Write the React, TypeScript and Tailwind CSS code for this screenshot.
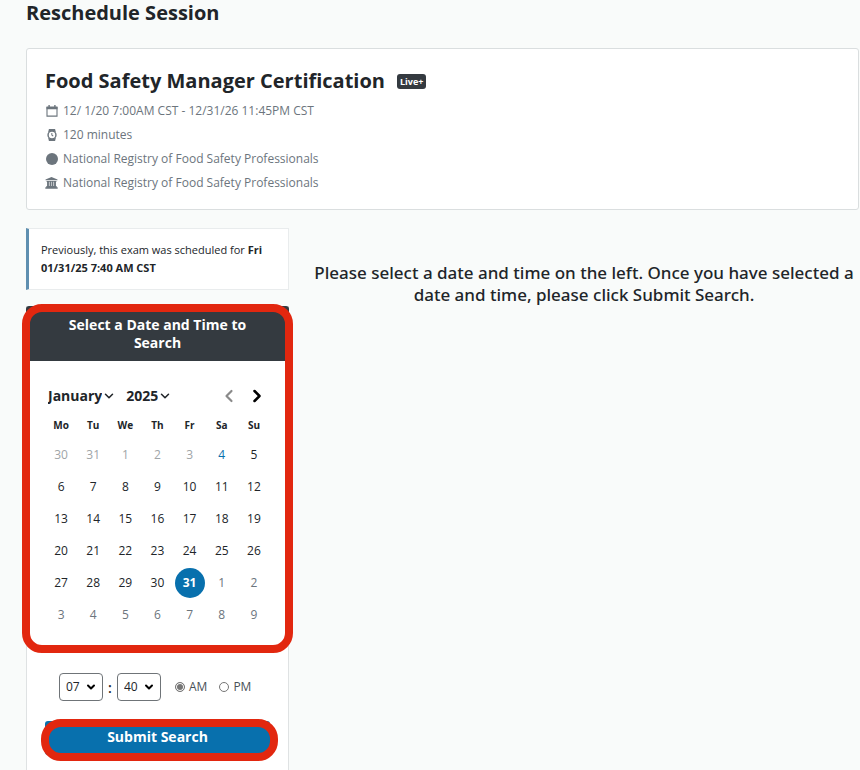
import type { ReactNode } from 'react';
import clsx from 'clsx';
import { ChevronDown, ChevronLeft, ChevronRight } from 'lucide-react';

const WEEKDAYS = ['Mo', 'Tu', 'We', 'Th', 'Fr', 'Sa', 'Su'];

const MONTHS = [
  'January',
  'February',
  'March',
  'April',
  'May',
  'June',
  'July',
  'August',
  'September',
  'October',
  'November',
  'December',
];

const FIRST_AVAILABLE = 4;
const SELECTED = 31;

type Day = { label: number; date: number };

// date counts from January 1st, so December 30th is -1
const WEEKS: Day[][] = Array.from({ length: 6 }, (_, week) =>
  Array.from({ length: 7 }, (_, day) => {
    const date = week * 7 + day - 1;
    const label = date < 1 ? date + 31 : date > 31 ? date - 31 : date;
    return { label, date };
  }),
);

const WatchIcon = () => (
  <svg viewBox="0 0 12 14" className="h-3 w-3" fill="none" aria-hidden="true">
    <path d="M2.4 0h7.2l0.8 3.4H1.6zM2.4 14h7.2l0.8-3.4H1.6z" fill="#6c757d" />
    <circle cx="6" cy="7" r="4.6" fill="#fff" stroke="#6c757d" strokeWidth="1.7" />
    <path d="M5.8 4.6V7l1.6 1.3" stroke="#6c757d" strokeWidth="1.2" />
  </svg>
);

const CalendarIcon = () => (
  <svg viewBox="0 0 12 12" className="size-3" fill="none" aria-hidden="true">
    <path d="M1 2.5h10v8.6H1z" stroke="#6c757d" strokeWidth="1.1" />
    <path d="M0.5 1.6h11v2.6H0.5zM2.4 0h1.4v2H2.4zM8.2 0h1.4v2H8.2z" fill="#6c757d" />
  </svg>
);

const InstitutionIcon = () => (
  <svg viewBox="0 0 14 13" className="h-3 w-[13px]" fill="#6c757d" aria-hidden="true">
    <path d="M7 0l6.5 2.6v1h-13v-1zM1.6 4.2h10.8v1H1.6zM2.2 5h2v5h-2zM4.9 5h1.8v5H4.9zM7.3 5h1.8v5H7.3zM9.8 5h2v5h-2zM1.4 9.8h11.2v1.2H1.4zM0.3 11h13.4v1.8H0.3z" />
  </svg>
);

const DetailRow = ({ icon, children }: { icon: ReactNode; children: ReactNode }) => (
  <li className="flex h-6 items-center gap-[5px]">
    <span className="flex w-[13px] shrink-0 justify-center">{icon}</span>
    <span>{children}</span>
  </li>
);

const ExamCard = () => (
  <section className="rounded-[3px] border border-[#dadedf] bg-white px-[18px] pt-[18px] pb-3.5">
    <div className="flex items-center gap-3">
      <h2 className="text-[20px] leading-7 font-bold">Food Safety Manager Certification</h2>
      <span className="rounded-[3px] bg-[#343a40] px-[3px] text-[9px] leading-[15px] font-bold text-white">
        Live+
      </span>
    </div>
    <ul className="mt-1 text-[12px] text-[#6c757d]">
      <DetailRow icon={<CalendarIcon />}>12/ 1/20 7:00AM CST - 12/31/26 11:45PM CST</DetailRow>
      <DetailRow icon={<WatchIcon />}>120 minutes</DetailRow>
      <DetailRow icon={<span className="size-3 rounded-full bg-[#6c757d]" />}>
        National Registry of Food Safety Professionals
      </DetailRow>
      <DetailRow icon={<InstitutionIcon />}>
        National Registry of Food Safety Professionals
      </DetailRow>
    </ul>
  </section>
);

const PickerSelect = ({ label, options }: { label: string; options: string[] }) => (
  <span className="inline-flex items-center">
    <select
      aria-label={label}
      defaultValue={options[0]}
      className="field-sizing-content appearance-none bg-transparent text-[14px] leading-5 font-bold"
    >
      {options.map((option) => (
        <option key={option}>{option}</option>
      ))}
    </select>
    <ChevronDown className="size-3.5" strokeWidth={2.6} aria-hidden="true" />
  </span>
);

const dayClass = ({ date }: Day) =>
  clsx(
    'inline-flex size-[30px] items-center justify-center rounded-full',
    date < FIRST_AVAILABLE && 'text-[#a0a5a8]',
    date === FIRST_AVAILABLE && 'font-medium text-[#0870ad]',
    date > FIRST_AVAILABLE && date < SELECTED && 'font-medium text-[#212529]',
    date === SELECTED && 'bg-[#0870ad] font-bold text-white',
    date > SELECTED && 'text-[#6c757d]',
  );

const Calendar = () => (
  <div className="px-[18px] pt-6 pb-4">
    <div className="flex h-[22px] items-center justify-between px-[3px]">
      <div className="flex gap-2.5">
        <PickerSelect label="Month" options={MONTHS} />
        <PickerSelect label="Year" options={['2025', '2026']} />
      </div>
      <div className="flex gap-2">
        <button type="button" aria-label="Previous month" className="text-[#8a8a8a]">
          <ChevronLeft className="size-5" strokeWidth={2.6} />
        </button>
        <button type="button" aria-label="Next month" className="text-black">
          <ChevronRight className="size-5" strokeWidth={3} />
        </button>
      </div>
    </div>
    <table className="mt-[5px] w-full table-fixed text-center text-[12px]">
      <thead>
        <tr className="h-[27px] text-[10px]">
          {WEEKDAYS.map((weekday) => (
            <th key={weekday} className="p-0 font-bold">
              {weekday}
            </th>
          ))}
        </tr>
      </thead>
      <tbody>
        {WEEKS.map((week) => (
          <tr key={week[0].date} className="h-8">
            {week.map((day) => (
              <td key={day.date} className="p-0">
                <button type="button" disabled={day.date < FIRST_AVAILABLE} className={dayClass(day)}>
                  {day.label}
                </button>
              </td>
            ))}
          </tr>
        ))}
      </tbody>
    </table>
  </div>
);

const TimeSelect = ({ label, options }: { label: string; options: string[] }) => (
  <span className="relative inline-flex">
    <select
      aria-label={label}
      defaultValue={options[0]}
      className="h-7 w-11 appearance-none rounded-[4px] border border-[#6f7478] bg-white pl-1.5 text-[12px]"
    >
      {options.map((option) => (
        <option key={option}>{option}</option>
      ))}
    </select>
    <ChevronDown
      className="pointer-events-none absolute top-2 right-1.5 size-3 text-black"
      strokeWidth={4}
      aria-hidden="true"
    />
  </span>
);

const PeriodRadio = ({ value, checked = false }: { value: string; checked?: boolean }) => (
  <label className="flex items-center gap-1">
    <input
      type="radio"
      name="period"
      value={value}
      defaultChecked={checked}
      className="size-2.5 appearance-none rounded-full border border-[#767676] bg-white checked:bg-[#767676] checked:shadow-[inset_0_0_0_1px_#fff]"
    />
    {value}
  </label>
);

const SearchPanel = () => (
  <form className="border-x border-[#dfe2e3] bg-white">
    <div className="relative">
      <h3 className="-mx-px rounded-t-[3px] bg-[#343a40] px-8 pt-2.5 pb-[9px] text-center text-[14px] leading-[18px] font-bold text-white">
        Select a Date and Time to Search
      </h3>
      <Calendar />
      <div className="pointer-events-none absolute -inset-x-[5px] -top-0.5 -bottom-1.5 rounded-[20px] border-8 border-[#e2270f]" />
    </div>

    <div className="px-[18px] pt-[26px] pb-4">
      <div className="flex items-center pl-3.5 text-[12px]">
        <TimeSelect label="Hour" options={['07', '08', '09']} />
        <span className="w-3.5 text-center text-[14px] font-semibold">:</span>
        <TimeSelect label="Minute" options={['40', '45', '50']} />
        <div className="ml-3.5 flex gap-3 text-[#495057]">
          <PeriodRadio value="AM" checked />
          <PeriodRadio value="PM" />
        </div>
      </div>

      <div className="relative mt-5">
        <button
          type="submit"
          className="h-[34px] w-full rounded-[3px] bg-[#0870ad] pb-1 text-[14px] font-bold text-white"
        >
          Submit Search
        </button>
        <div className="pointer-events-none absolute -top-0.5 -right-2 -bottom-1.5 -left-1 rounded-[20px] border-8 border-[#e2270f]" />
      </div>
    </div>
  </form>
);

export default function App() {
  return (
    <main className="min-h-screen bg-[#f9fbfa] pr-px pl-[26px] font-['Open_Sans',sans-serif] text-[#212529]">
      <h1 className="text-[20px] leading-[26px] font-bold">Reschedule Session</h1>

      <div className="mt-[22px]">
        <ExamCard />
      </div>

      <div className="mt-[18px] flex gap-5">
        <div className="w-[263px] shrink-0">
          <p className="mb-4 border border-l-[3px] border-[#e9eced] border-l-[#5f8fb0] bg-white p-3 text-[11px] leading-[18px]">
            Previously, this exam was scheduled for <b>Fri 01/31/25 7:40 AM CST</b>
          </p>
          <SearchPanel />
        </div>

        <p className="flex-1 pt-[34px] text-center font-['Noto_Sans',sans-serif] text-[17px] leading-[22px] font-medium">
          Please select a date and time on the left. Once you have selected a date and time, please
          click Submit Search.
        </p>
      </div>
    </main>
  );
}
